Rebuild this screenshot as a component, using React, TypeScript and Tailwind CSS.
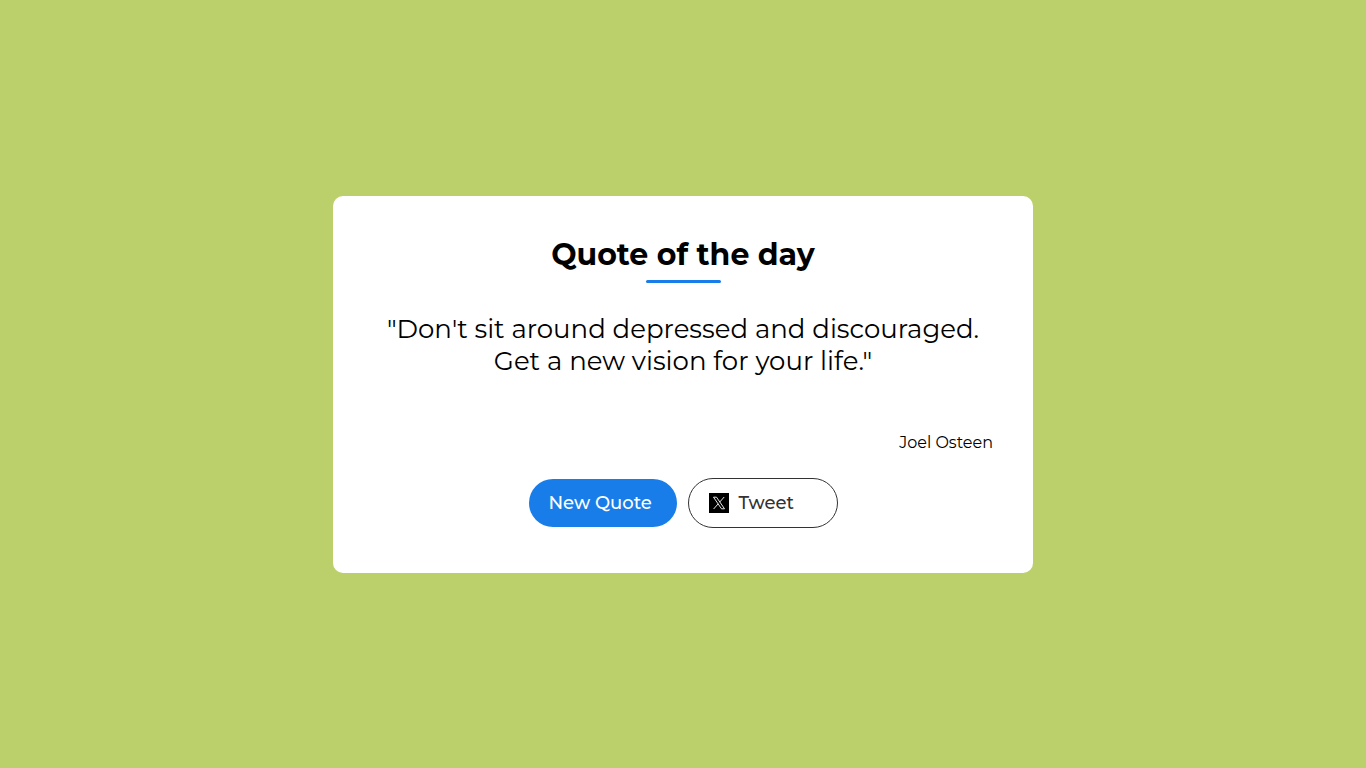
const quote = {
  text: "\"Don't sit around depressed and discouraged. Get a new vision for your life.\"",
  author: "Joel Osteen",
};

const XLogo = () => (
  <svg viewBox="0 0 20 20" className="w-5 h-5 shrink-0" aria-hidden="true">
    <rect width="20" height="20" fill="#000" />
    <path d="M4.5 4.2h3l8 11.6h-3z" fill="none" stroke="#fff" strokeWidth="0.9" />
    <path d="M15.2 4l-4.6 5.2M9.2 10.8L4.6 16" fill="none" stroke="#fff" strokeWidth="0.9" />
  </svg>
);

const App = () => {
  return (
    <div className="min-h-screen flex items-center justify-center bg-[#bbd06b] text-black font-['Montserrat','Inter',sans-serif]">
      <main className="w-full max-w-[700px] bg-white rounded-[10px] px-10 pt-10 pb-[45px] text-center">
        <h2 className="text-[30px] leading-[37px] font-bold">Quote of the day</h2>
        <div className="w-[75px] h-[3px] mt-[7px] mx-auto rounded-[3px] bg-[#187de8]" />
        <blockquote className="mt-[30px] min-h-[110px] text-[26px] leading-8">{quote.text}</blockquote>
        <p className="mt-[10px] text-right text-base leading-5">{quote.author}</p>
        <div className="mt-[25px] flex items-center justify-center gap-[11px]">
          <button className="w-[148px] h-12 px-5 rounded-full bg-[#187de8] text-left text-lg font-medium text-white">
            New Quote
          </button>
          <button className="w-[150px] h-[50px] px-5 flex items-center gap-2.5 rounded-full border border-[#333] bg-white text-lg font-medium text-[#333]">
            <XLogo />
            Tweet
          </button>
        </div>
      </main>
    </div>
  );
};

export default App;
